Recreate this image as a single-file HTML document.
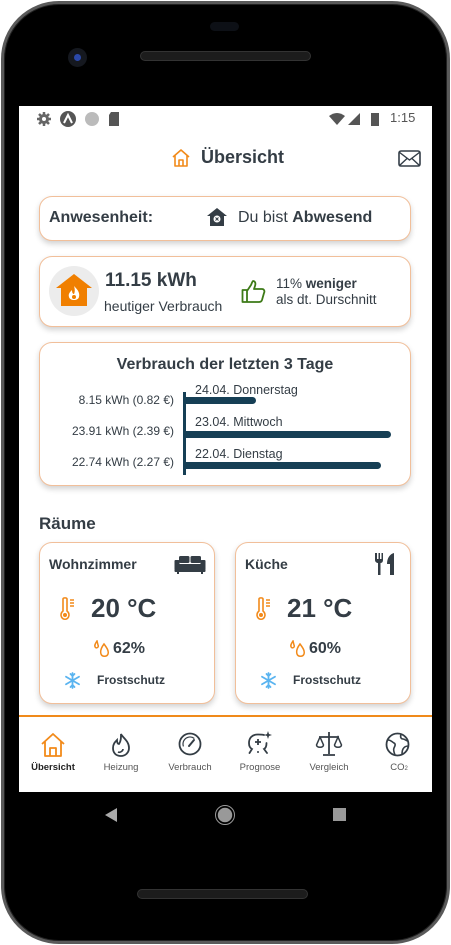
<!DOCTYPE html>
<html><head><meta charset="utf-8"><style>
*{margin:0;padding:0;box-sizing:border-box}
body{width:451px;height:945px;background:#fff;position:relative;overflow:hidden;font-family:"Liberation Sans",Roboto,sans-serif;color:#343d45}
.a{position:absolute}
.phone{left:1px;top:1px;width:449px;height:943px;border-radius:58px;background:#000;border:3px solid #5a5a5a;box-shadow:inset 0 0 0 1px #222}
.screen{left:19px;top:106px;width:413px;height:686px;background:#fff;overflow:hidden}
.card{position:absolute;background:#fff;border:1px solid #f1bf9a;border-radius:13px;box-shadow:0 3px 6px rgba(0,0,0,.18)}
.t{position:absolute;white-space:nowrap}
.nav .t{font-size:9.5px;color:#555;transform:translateX(-50%)}
</style></head><body>
<div class="a phone"></div>
<div class="a" style="left:140px;top:51px;width:171px;height:10px;border-radius:5px;background:#1c1c1c;border:1px solid #333"></div>
<div class="a" style="left:210px;top:22px;width:29px;height:9px;border-radius:5px;background:#0d1016"></div>
<div class="a" style="left:68px;top:48px;width:19px;height:19px;border-radius:50%;background:#15181f"><div class="a" style="left:6px;top:6px;width:7px;height:7px;border-radius:50%;background:#2b48a8"></div></div>
<div class="a" style="left:137px;top:889px;width:171px;height:10px;border-radius:5px;background:#1c1c1c;border:1px solid #333"></div>
<svg class="a" style="left:100px;top:805px" width="250" height="22"><polygon points="17,3 17,17 5,10" fill="#aaa"/><circle cx="125" cy="10" r="8" fill="#999" stroke="#000" stroke-width="1.5"/><circle cx="125" cy="10" r="9.5" fill="none" stroke="#999" stroke-width="1"/><rect x="233" y="3" width="13" height="13" fill="#999"/></svg>

<div class="a screen">
 <svg class="a" style="left:16px;top:4px" width="100" height="18"><g stroke="#666" stroke-width="2.5"><path d="M9 2V16M2 9H16M4 4L14 14M14 4L4 14"/></g><circle cx="9" cy="9" r="5" fill="#666"/><circle cx="9" cy="9" r="2" fill="#fff"/><circle cx="33" cy="9" r="8" fill="#555"/><path d="M29 13 L33 5 L37 13" stroke="#fff" stroke-width="2" fill="none"/><circle cx="57" cy="9" r="7" fill="#bbb"/><path d="M76 2h8v14h-10v-11z" fill="#555"/></svg>
 <svg class="a" style="left:308px;top:4px" width="55" height="18"><path d="M2 6 Q10 0 18 6 L10 15z" fill="#555"/><path d="M21 15 L33 3 L33 15z" fill="#555"/><rect x="44" y="3" width="8" height="13" fill="#555"/></svg>
 <div class="t" style="left:371px;top:4px;font-size:13px;color:#555">1:15</div>
 <svg class="a" style="left:152px;top:42px" width="20" height="20" viewBox="0 0 20 20"><path d="M2 9 L10 2 L18 9 M4 7.5 V18 H16 V7.5 M8 18 V12 H12 V18" stroke="#f28a1a" stroke-width="1.6" fill="none" stroke-linejoin="round"/></svg>
 <div class="t" style="left:182px;top:41px;font-size:18px;font-weight:bold">Übersicht</div>
 <svg class="a" style="left:379px;top:44px" width="23" height="17"><rect x="1" y="1" width="21" height="15" rx="2" fill="none" stroke="#333d47" stroke-width="1.6"/><path d="M1 2 L11.5 10 L22 2 M1 16 L9 8.5 M22 16 L14 8.5" stroke="#333d47" stroke-width="1.4" fill="none"/></svg>

 <div class="card" style="left:20px;top:90px;width:372px;height:45px"></div>
 <div class="t" style="left:30px;top:103px;font-size:16px;font-weight:bold">Anwesenheit:</div>
 <svg class="a" style="left:187px;top:101px" width="22" height="20" viewBox="0 0 22 20"><path d="M1 9 L11 1 L21 9 H18 V19 H4 V9z" fill="#343d45"/><circle cx="11" cy="12" r="3.5" fill="#fff"/><path d="M9.5 10.5 L12.5 13.5 M12.5 10.5 L9.5 13.5" stroke="#343d45" stroke-width="1"/></svg>
 <div class="t" style="left:219px;top:103px;font-size:16px">Du bist <b>Abwesend</b></div>

 <div class="card" style="left:20px;top:150px;width:372px;height:71px"></div>
 <div class="a" style="left:30px;top:160px;width:50px;height:50px;border-radius:50%;background:#ececec"></div>
 <svg class="a" style="left:35px;top:166px" width="40" height="36" viewBox="0 0 40 36"><path d="M2 16 L20 2 L38 16 H33 V34 H7 V16z" fill="#f07f00"/><path d="M20 14 C24 18 26 21 25 25 C24 29 16 29 15 25 C14 22 16 20 18 18 C18 21 19 22 20 22 C21 20 21 17 20 14z" fill="#fff"/><circle cx="20" cy="25" r="2" fill="#f07f00"/></svg>
 <div class="t" style="left:86px;top:164px;font-size:19px;font-weight:bold">11.15 kWh</div>
 <div class="t" style="left:85px;top:192px;font-size:14px">heutiger Verbrauch</div>
 <svg class="a" style="left:222px;top:174px" width="25" height="24" viewBox="0 0 25 24"><path d="M1.5 10 H6 V22 H1.5z M6 11 L10 5 C11 3 11 2 12 1 C14 1 15 3 14 6 L13 9 H21 C23 9 24 11 23 13 L21 20 C20.5 21.5 19.5 22 18 22 H6" fill="none" stroke="#3d7a17" stroke-width="1.8" stroke-linejoin="round"/></svg>
 <div class="t" style="left:257px;top:170px;font-size:13.5px">11% <b>weniger</b></div>
 <div class="t" style="left:257px;top:186px;font-size:13.5px">als dt. Durschnitt</div>

 <div class="card" style="left:20px;top:236px;width:372px;height:144px"></div>
 <div class="t" style="left:20px;width:372px;text-align:center;top:250px;font-size:16px;font-weight:bold">Verbrauch der letzten 3 Tage</div>
 <div class="a" style="left:164px;top:286px;width:2.5px;height:83px;background:#163f55"></div>
 <div class="a" style="left:165px;top:291px;width:72px;height:7px;background:#163f55;border-radius:0 4px 4px 0"></div>
 <div class="a" style="left:165px;top:325px;width:207px;height:7px;background:#163f55;border-radius:0 4px 4px 0"></div>
 <div class="a" style="left:165px;top:356px;width:197px;height:7px;background:#163f55;border-radius:0 4px 4px 0"></div>
 <div class="t" style="left:176px;top:277px;font-size:12.5px">24.04. Donnerstag</div>
 <div class="t" style="left:176px;top:309px;font-size:12.5px">23.04. Mittwoch</div>
 <div class="t" style="left:176px;top:341px;font-size:12.5px">22.04. Dienstag</div>
 <div class="t" style="right:258px;top:287px;font-size:12px">8.15 kWh (0.82 €)</div>
 <div class="t" style="right:258px;top:318px;font-size:12px">23.91 kWh (2.39 €)</div>
 <div class="t" style="right:258px;top:349px;font-size:12px">22.74 kWh (2.27 €)</div>

 <div class="t" style="left:20px;top:408px;font-size:17px;font-weight:bold">Räume</div>

 <div class="card" style="left:20px;top:436px;width:176px;height:162px"></div>
 <div class="card" style="left:216px;top:436px;width:176px;height:162px"></div>
 <div class="t" style="left:30px;top:450px;font-size:14px;font-weight:bold">Wohnzimmer</div>
 <div class="t" style="left:226px;top:450px;font-size:14px;font-weight:bold">Küche</div>
 <svg class="a" style="left:155px;top:449px" width="32" height="20" viewBox="0 0 32 20"><rect x="5" y="1" width="10.5" height="7" rx="1.5" fill="#343d45"/><rect x="16.5" y="1" width="10.5" height="7" rx="1.5" fill="#343d45"/><rect x="0.5" y="5" width="5" height="10" rx="1" fill="#343d45"/><rect x="26.5" y="5" width="5" height="10" rx="1" fill="#343d45"/><rect x="5" y="9" width="22" height="6" fill="#343d45"/><rect x="0.5" y="14" width="31" height="3" rx="1" fill="#343d45"/><rect x="3" y="16" width="2" height="3" fill="#343d45"/><rect x="27" y="16" width="2" height="3" fill="#343d45"/></svg>
 <svg class="a" style="left:354px;top:446px" width="24" height="24" viewBox="0 0 24 24"><path d="M2 1 V8 C2 10 4 11 5 11 V23 H7.5 V11 C9 11 10 10 10 8 V1 H8.5 V7 H7 V1 H5.5 V7 H4 V1z" fill="#343d45"/><path d="M21 1 C17 2 14 6 14 12 H17 V23 H21z" fill="#343d45"/></svg>
 <svg class="a" style="left:40px;top:490px" width="20" height="26" viewBox="0 0 20 26"><path d="M4 3 C4 1.5 8 1.5 8 3 V15 C10 16.5 10.5 19 9.5 21 C8 24 4 24 2.5 21 C1.5 19 2 16.5 4 15z" fill="none" stroke="#f28a1a" stroke-width="1.6"/><circle cx="6" cy="19" r="2" fill="#f28a1a"/><path d="M11 4 H15 M11 7 H15 M11 10 H15" stroke="#f28a1a" stroke-width="1.4"/></svg>
 <svg class="a" style="left:236px;top:490px" width="20" height="26" viewBox="0 0 20 26"><path d="M4 3 C4 1.5 8 1.5 8 3 V15 C10 16.5 10.5 19 9.5 21 C8 24 4 24 2.5 21 C1.5 19 2 16.5 4 15z" fill="none" stroke="#f28a1a" stroke-width="1.6"/><circle cx="6" cy="19" r="2" fill="#f28a1a"/><path d="M11 4 H15 M11 7 H15 M11 10 H15" stroke="#f28a1a" stroke-width="1.4"/></svg>
 <div class="t" style="left:72px;top:487px;font-size:26px;font-weight:bold">20 °C</div>
 <div class="t" style="left:268px;top:487px;font-size:26px;font-weight:bold">21 °C</div>
 <svg class="a" style="left:75px;top:534px" width="16" height="18" viewBox="0 0 16 18"><path d="M3 1 C1 4 0 6 1.5 7.5 C3 8.5 5 7 4 5z M10 4 C7 8 6 11 7 14 C8 17 13 17 14 14 C15 11 13 8 10 4z" fill="none" stroke="#f28a1a" stroke-width="1.5"/></svg>
 <svg class="a" style="left:271px;top:534px" width="16" height="18" viewBox="0 0 16 18"><path d="M3 1 C1 4 0 6 1.5 7.5 C3 8.5 5 7 4 5z M10 4 C7 8 6 11 7 14 C8 17 13 17 14 14 C15 11 13 8 10 4z" fill="none" stroke="#f28a1a" stroke-width="1.5"/></svg>
 <div class="t" style="left:94px;top:534px;font-size:16px;font-weight:bold">62%</div>
 <div class="t" style="left:290px;top:534px;font-size:16px;font-weight:bold">60%</div>
 <svg class="a" style="left:45px;top:566px" width="17" height="17" viewBox="0 0 17 17"><g stroke="#5ab4f0" stroke-width="1.8" stroke-linecap="round"><path d="M8.5 1 V16 M2 4.75 L15 12.25 M2 12.25 L15 4.75"/><path d="M6.5 2 L8.5 4 L10.5 2 M6.5 15 L8.5 13 L10.5 15" fill="none"/></g></svg>
 <svg class="a" style="left:241px;top:566px" width="17" height="17" viewBox="0 0 17 17"><g stroke="#5ab4f0" stroke-width="1.8" stroke-linecap="round"><path d="M8.5 1 V16 M2 4.75 L15 12.25 M2 12.25 L15 4.75"/><path d="M6.5 2 L8.5 4 L10.5 2 M6.5 15 L8.5 13 L10.5 15" fill="none"/></g></svg>
 <div class="t" style="left:78px;top:567px;font-size:12px;font-weight:bold">Frostschutz</div>
 <div class="t" style="left:274px;top:567px;font-size:12px;font-weight:bold">Frostschutz</div>

 <div class="a" style="left:0;top:609px;width:413px;height:77px;background:#fff;border-top:2px solid #f08a1a"></div>
 <div class="nav">
  <svg class="a" style="left:21px;top:626px" width="26" height="26" viewBox="0 0 26 26"><path d="M2 12 L13 2 L24 12 M5 9.5 V24 H21 V9.5 M10 24 V16 H16 V24" stroke="#f28a1a" stroke-width="1.8" fill="none" stroke-linejoin="round"/></svg>
  <svg class="a" style="left:90px;top:626px" width="24" height="26" viewBox="0 0 24 26"><path d="M12 2 C14 6 20 9 20 16 C20 21 16 24 12 24 C7 24 4 21 4 16 C4 12 6 10 8 8 C8 11 9 12 10 12 C12 9 12 6 12 2z" fill="none" stroke="#343d45" stroke-width="1.8"/><path d="M9 20 C11 21 14 19 14 17" stroke="#343d45" stroke-width="1.6" fill="none"/></svg>
  <svg class="a" style="left:159px;top:626px" width="24" height="24" viewBox="0 0 24 24"><circle cx="12" cy="12" r="10.5" fill="none" stroke="#343d45" stroke-width="1.8"/><circle cx="12" cy="12" r="7" fill="none" stroke="#343d45" stroke-width="1.2" stroke-dasharray="18 26" transform="rotate(160 12 12)"/><path d="M11 14 L16 8" stroke="#343d45" stroke-width="2" stroke-linecap="round"/></svg>
  <svg class="a" style="left:227px;top:624px" width="28" height="28" viewBox="0 0 28 28"><path d="M18 5 C16 4.5 14 4.5 12 4.5 C6 4.5 3 8 3 13 C3 16 4 18 6 19 L3.5 23 M20.5 13 C20.5 16 20 18 18 19 L21 23" stroke="#343d45" stroke-width="1.8" fill="none" stroke-linecap="round"/><path d="M12 9 V15 M9 12 H15" stroke="#343d45" stroke-width="1.8"/><path d="M22 1 L23 4 L26 5 L23 6 L22 9 L21 6 L18 5 L21 4z" fill="#343d45"/><circle cx="12" cy="22" r="1" fill="#343d45"/></svg>
  <svg class="a" style="left:296px;top:624px" width="28" height="28" viewBox="0 0 28 28"><path d="M14 2 V24 M8 25 H20 M4 7 H24 M14 5 L14 7" stroke="#343d45" stroke-width="1.8" fill="none"/><path d="M5 7 L1.5 15 C2 18 8 18 8.5 15 L5 7 M23 7 L19.5 15 C20 18 26 18 26.5 15z" fill="none" stroke="#343d45" stroke-width="1.5"/></svg>
  <svg class="a" style="left:366px;top:626px" width="25" height="25" viewBox="0 0 25 25"><circle cx="12.5" cy="12.5" r="11" fill="none" stroke="#343d45" stroke-width="1.8"/><path d="M3 8 C6 8 7 10 9 11 C11 12 10 14 9 16 C8 18 9 20 10 23 M16 2.5 C15 5 16 7 18 7 C20 7 21 9 23 9 M23.5 14 C21 14 19 15 18 17 C17 19 17 21 17 22.5" stroke="#343d45" stroke-width="1.6" fill="none"/></svg>
  <div class="t" style="left:34px;top:656px;font-weight:bold;color:#222">Übersicht</div>
  <div class="t" style="left:102px;top:656px">Heizung</div>
  <div class="t" style="left:171px;top:656px">Verbrauch</div>
  <div class="t" style="left:241px;top:656px">Prognose</div>
  <div class="t" style="left:310px;top:656px">Vergleich</div>
  <div class="t" style="left:380px;top:656px">CO<span style="font-size:6px">2</span></div>
 </div>
</div>
</body></html>
